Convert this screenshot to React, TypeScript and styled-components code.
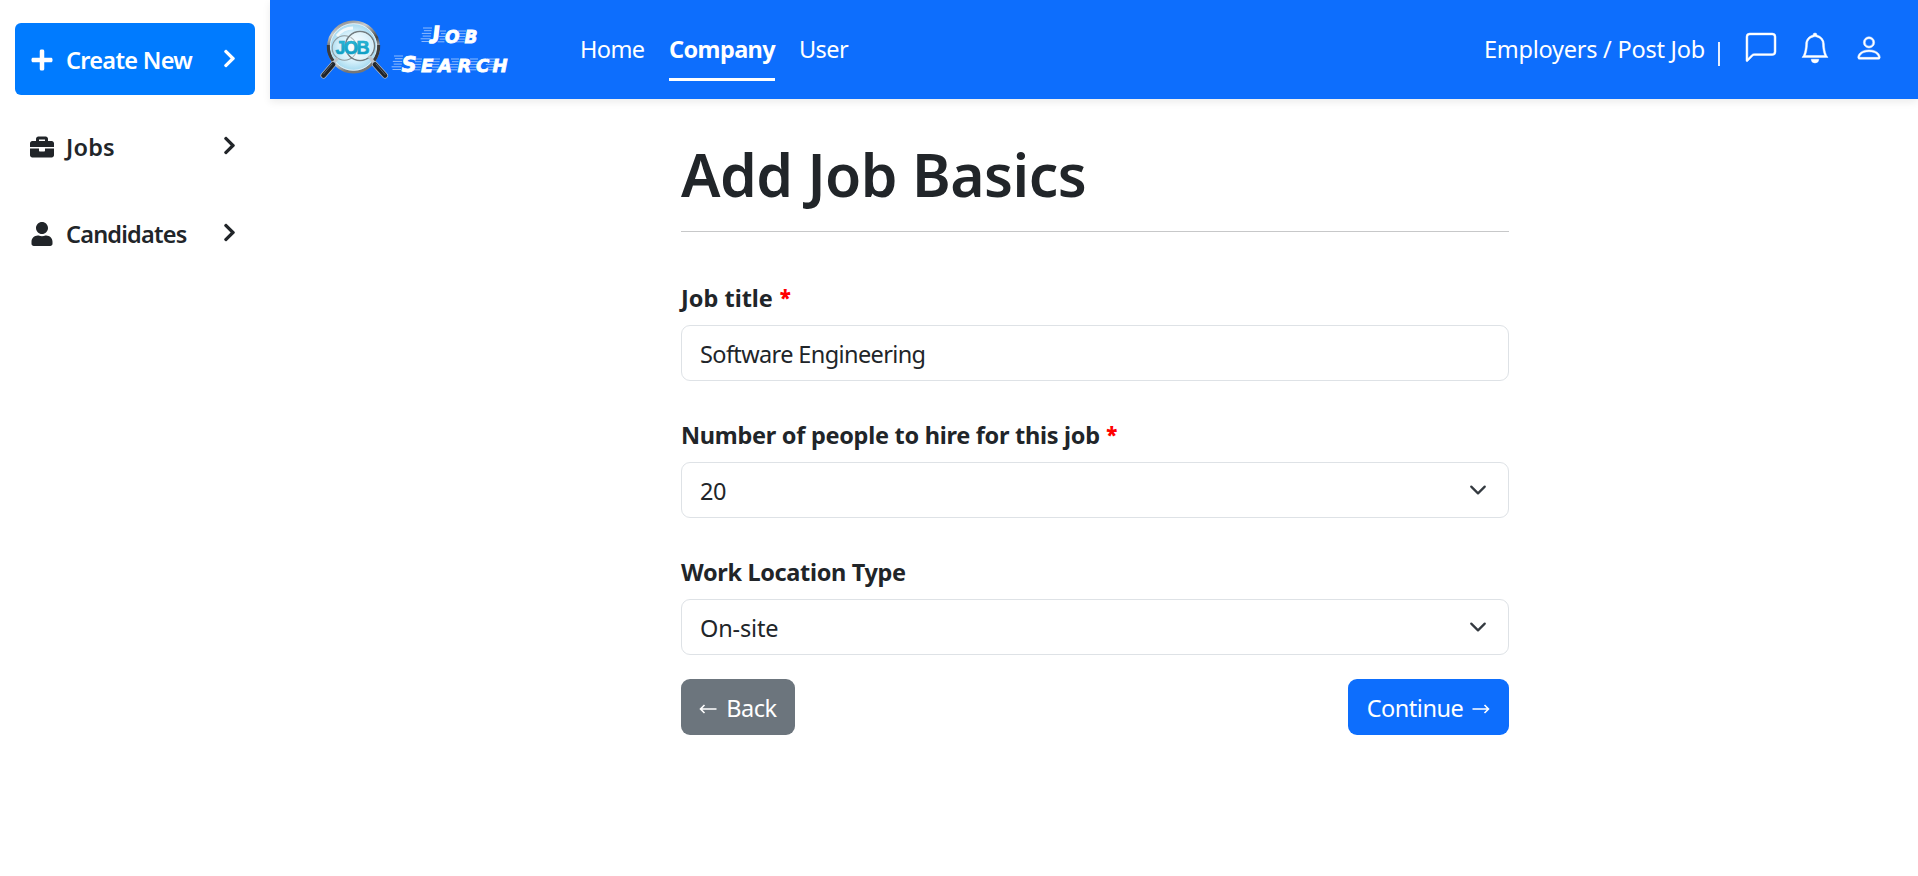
import React from "react";
import styled, { createGlobalStyle } from "styled-components";
import { FaPlus, FaBriefcase, FaUser, FaChevronRight } from "react-icons/fa";
import { BsChatLeft, BsBell, BsPerson } from "react-icons/bs";

const GlobalStyle = createGlobalStyle`
  * { box-sizing: border-box; }
  body {
    margin: 0;
    background: #fff;
    color: #212529;
    font-family: "Noto Sans", "Open Sans", sans-serif;
    font-size: 23.5px;
    line-height: 36px;
  }
`;

const Page = styled.div`
  display: flex;
  min-height: 876px;
`;

const Sidebar = styled.aside`
  flex: none;
  width: 270px;
  padding: 23px 15px;
  display: flex;
  flex-direction: column;
  gap: 15px;
`;

const SideItem = styled.a<{ $active?: boolean; $track: number }>`
  display: flex;
  align-items: center;
  height: 72px;
  padding: 2px 19px 0 15px;
  border-radius: 6px;
  font-weight: 600;
  white-space: nowrap;
  letter-spacing: ${(p) => p.$track}px;
  color: ${(p) => (p.$active ? "#fff" : "#212529")};
  background: ${(p) => (p.$active ? "#007bff" : "transparent")};

  span {
    flex: 1;
    margin-left: 12px;
  }
`;

const SideIcon = styled.i`
  display: flex;
  justify-content: center;
  width: 24px;
  font-size: 24px;
`;

const SideChevron = styled(FaChevronRight)`
  flex: none;
  width: 13px;
  height: 21px;
  margin-bottom: 4px;
`;

const Main = styled.div`
  flex: 1;
  display: flex;
  flex-direction: column;
`;

const Navbar = styled.header`
  display: flex;
  align-items: flex-start;
  height: 99px;
  padding: 0 34px 0 45px;
  background: #0d6efd;
  color: #fff;
  box-shadow: 0 3px 8px rgba(0, 0, 0, 0.08);
`;

const Brand = styled.a`
  display: block;
  width: 200px;
  height: 99px;
  margin-right: 65px;
`;

const NavLinks = styled.nav`
  display: flex;
  gap: 24px;
  padding-top: 31px;
`;

const NavItem = styled.a<{ $active?: boolean; $width: number }>`
  width: ${(p) => p.$width}px;
  height: 50px;
  white-space: nowrap;
  letter-spacing: -0.6px;
  font-weight: ${(p) => (p.$active ? 700 : 400)};
  border-bottom: 3px solid ${(p) => (p.$active ? "#fff" : "transparent")};
`;

const NavTools = styled.div`
  display: flex;
  gap: 24px;
  margin-left: auto;
  padding-top: 33px;

  svg {
    display: block;
    width: 30px;
    height: 30px;
    stroke: #fff;
    stroke-width: 0.25px;
    overflow: visible;
  }
`;

const Employers = styled.a`
  display: flex;
  width: 238px;
  margin-top: -2px;
  letter-spacing: -0.25px;
  white-space: nowrap;
`;

const Divider = styled.span`
  width: 2px;
  height: 24px;
  margin: 11px 0 0 13px;
  background: #e4eeff;
`;

const Form = styled.main`
  width: 828px;
  margin: 39px 0 0 411px;
`;

const Title = styled.h1`
  margin: 0;
  font-size: 58.8px;
  line-height: 72px;
  font-weight: 600;
  letter-spacing: -0.5px;
`;

const Rule = styled.hr`
  margin: 21px 0 48px;
  border: 0;
  border-top: 1px solid #c7c8c9;
`;

const Fields = styled.div`
  display: flex;
  flex-direction: column;
  gap: 36px;
`;

const Label = styled.label<{ $track: number }>`
  display: block;
  margin-bottom: 9px;
  font-weight: 700;
  letter-spacing: ${(p) => p.$track}px;

  b {
    margin-left: 0.8px;
    font-size: 20.5px;
    line-height: 20px;
    vertical-align: 2px;
    color: #f00;
  }
`;

const Control = styled.div<{ $track: number }>`
  display: flex;
  align-items: center;
  justify-content: space-between;
  height: 56px;
  padding: 2px 21px 0 18px;
  border: 1px solid #dee2e6;
  border-radius: 9px;
  letter-spacing: ${(p) => p.$track}px;

  svg {
    width: 18px;
    height: 18px;
    margin-bottom: 2px;
  }
`;

const Actions = styled.div`
  display: flex;
  justify-content: space-between;
  margin-top: 24px;
`;

const Button = styled.button<{ $primary?: boolean }>`
  display: flex;
  align-items: center;
  justify-content: center;
  gap: 9px;
  width: ${(p) => (p.$primary ? 161 : 114)}px;
  height: 56px;
  padding: 2px 0 0;
  border: 0;
  border-radius: 9px;
  font: inherit;
  letter-spacing: -0.5px;
  color: #fff;
  background: ${(p) => (p.$primary ? "#0d6efd" : "#6c757d")};

  svg {
    width: 18px;
    height: 10px;
    margin-top: 2px;
  }
`;

const LogoText = styled.text`
  font-family: "DejaVu Sans", sans-serif;
  font-weight: 700;
  font-style: italic;
  fill: #fff;
  stroke: #fff;
  stroke-width: 0.8px;
`;

const LogoJ = styled.tspan`
  font-family: Lato, sans-serif;
  font-size: 22px;
  font-weight: 900;
  stroke-width: 1.6px;
`;

/* Horizontal speed streaks trailing to the left of a letter. */
const Streaks = ({ x, y, w, n }: { x: number; y: number; w: number; n: number }) => (
  <g stroke="#fff" strokeWidth="0.9" opacity="0.6">
    {Array.from({ length: n }, (_, i) => (
      <path key={i} d={`M${x - i * 0.6 + (i % 2) * 1.5} ${y + i * 2.7}H${x + w - i * 0.4}`} />
    ))}
  </g>
);

const Logo = () => (
  <svg width="200" height="99" viewBox="315 0 200 99" role="img" aria-label="Job Search">
    <defs>
      <radialGradient id="glass" cx="0.5" cy="0.5" r="0.55">
        <stop offset="0" stopColor="#fff" />
        <stop offset="0.55" stopColor="#d3effa" />
        <stop offset="1" stopColor="#8fcfeb" />
      </radialGradient>
      <linearGradient id="rim" x1="0" y1="0" x2="0.3" y2="1">
        <stop offset="0" stopColor="#777" />
        <stop offset="0.25" stopColor="#c9cccd" />
        <stop offset="0.55" stopColor="#454545" />
        <stop offset="0.8" stopColor="#d4d4d4" />
        <stop offset="1" stopColor="#777" />
      </linearGradient>
      <linearGradient id="word" x1="0" y1="0" x2="0" y2="1">
        <stop offset="0" stopColor="#31bddb" />
        <stop offset="1" stopColor="#0795bd" />
      </linearGradient>
    </defs>
    <circle cx="353.5" cy="47" r="25" fill="url(#glass)" stroke="url(#rim)" strokeWidth="2.8" />
    <circle cx="353.5" cy="47" r="23.3" fill="none" stroke="#f2f8fa" strokeWidth="0.8" />
    <path d="M328.3 45a25 25 0 0 0 5 16M378.7 45a25 25 0 0 1-5 16" fill="none" stroke="#3b3b3b" strokeWidth="3" />
    <path d="M337 36q6-8 16-8" fill="none" stroke="#fff" strokeWidth="3" opacity="0.8" />
    <circle cx="344.5" cy="48" r="12.3" fill="none" stroke="#8d9a9e" strokeWidth="1.1" />
    <circle cx="360" cy="46" r="14.5" fill="#fff" fillOpacity="0.3" stroke="#727c80" strokeWidth="1.5" />
    <circle cx="360" cy="46" r="13.3" fill="none" stroke="#e4f3f7" strokeWidth="0.7" />
    <text x="335.5 344 356.5" y="54" fontFamily="Liberation Sans" fontWeight="700" fontSize="18" fill="url(#word)" stroke="#14a5c8" strokeWidth="0.7">JOB</text>
    <g strokeLinecap="round" fill="none">
      <path d="M337 59L332.5 64M369.5 57L375 64" stroke="#bfc4c8" strokeWidth="3" />
      <path d="M333 64.5L323.5 75.5M375 64.5L385 75.5" stroke="#aeb6c2" strokeWidth="6" />
      <path d="M333 64.5L323.5 75.5M375 64.5L385 75.5" stroke="#20242a" strokeWidth="4.6" />
      <path d="M332 64L323.5 74M376 64L385 74.5" stroke="#59616b" strokeWidth="1" />
    </g>
    <Streaks x={423} y={28} w={9} n={6} />
    <Streaks x={440} y={31} w={6} n={5} />
    <Streaks x={458} y={31} w={8} n={5} />
    <LogoText x="430 445 464.5" y="43" fontSize="17">
      <LogoJ>J</LogoJ>OB
    </LogoText>
    <Streaks x={394} y={56} w={9} n={6} />
    <Streaks x={414} y={59} w={8} n={5} />
    <Streaks x={432} y={59} w={8} n={5} />
    <Streaks x={451} y={59} w={8} n={5} />
    <Streaks x={470} y={59} w={8} n={5} />
    <Streaks x={487} y={59} w={8} n={5} />
    <LogoText x="401.5 421 438 457.5 476 492.500" y="71.5" fontSize="18">
      <tspan fontSize="21">S</tspan>EARCH
    </LogoText>
  </svg>
);

const SelectArrow = () => (
  <svg viewBox="0 0 16 16" fill="none" stroke="#343a40" strokeWidth="2" strokeLinecap="round" strokeLinejoin="round">
    <path d="m2 5 6 6 6-6" />
  </svg>
);

const Arrow = ({ left }: { left?: boolean }) => (
  <svg viewBox="0 0 18 10" fill="none" stroke="#fff" strokeWidth="1.6">
    <path d={left ? "M17.5 5h-16M5.5 1l-4 4 4 4" : "M.5 5h16M12.5 1l4 4-4 4"} />
  </svg>
);

export default function App() {
  return (
    <>
      <GlobalStyle />
      <Page>
        <Sidebar>
          <SideItem $active $track={-0.7}>
            <SideIcon><FaPlus /></SideIcon>
            <span>Create New</span>
            <SideChevron />
          </SideItem>
          <SideItem $track={0.2}>
            <SideIcon><FaBriefcase /></SideIcon>
            <span>Jobs</span>
            <SideChevron />
          </SideItem>
          <SideItem $track={-0.8}>
            <SideIcon><FaUser /></SideIcon>
            <span>Candidates</span>
            <SideChevron />
          </SideItem>
        </Sidebar>
        <Main>
          <Navbar>
            <Brand><Logo /></Brand>
            <NavLinks>
              <NavItem $width={65}>Home</NavItem>
              <NavItem $active $width={106}>Company</NavItem>
              <NavItem $width={50}>User</NavItem>
            </NavLinks>
            <NavTools>
              <Employers>Employers / Post Job<Divider /></Employers>
              <BsChatLeft />
              <BsBell />
              <BsPerson />
            </NavTools>
          </Navbar>
          <Form>
            <Title>Add Job Basics</Title>
            <Rule />
            <Fields>
              <div>
                <Label $track={0}>Job title <b>*</b></Label>
                <Control $track={-0.62}>Software Engineering</Control>
              </div>
              <div>
                <Label $track={-0.28}>Number of people to hire for this job <b>*</b></Label>
                <Control $track={-0.4}>20<SelectArrow /></Control>
              </div>
              <div>
                <Label $track={-0.34}>Work Location Type</Label>
                <Control $track={-0.15}>On-site<SelectArrow /></Control>
              </div>
            </Fields>
            <Actions>
              <Button><Arrow left />Back</Button>
              <Button $primary>Continue<Arrow /></Button>
            </Actions>
          </Form>
        </Main>
      </Page>
    </>
  );
}
